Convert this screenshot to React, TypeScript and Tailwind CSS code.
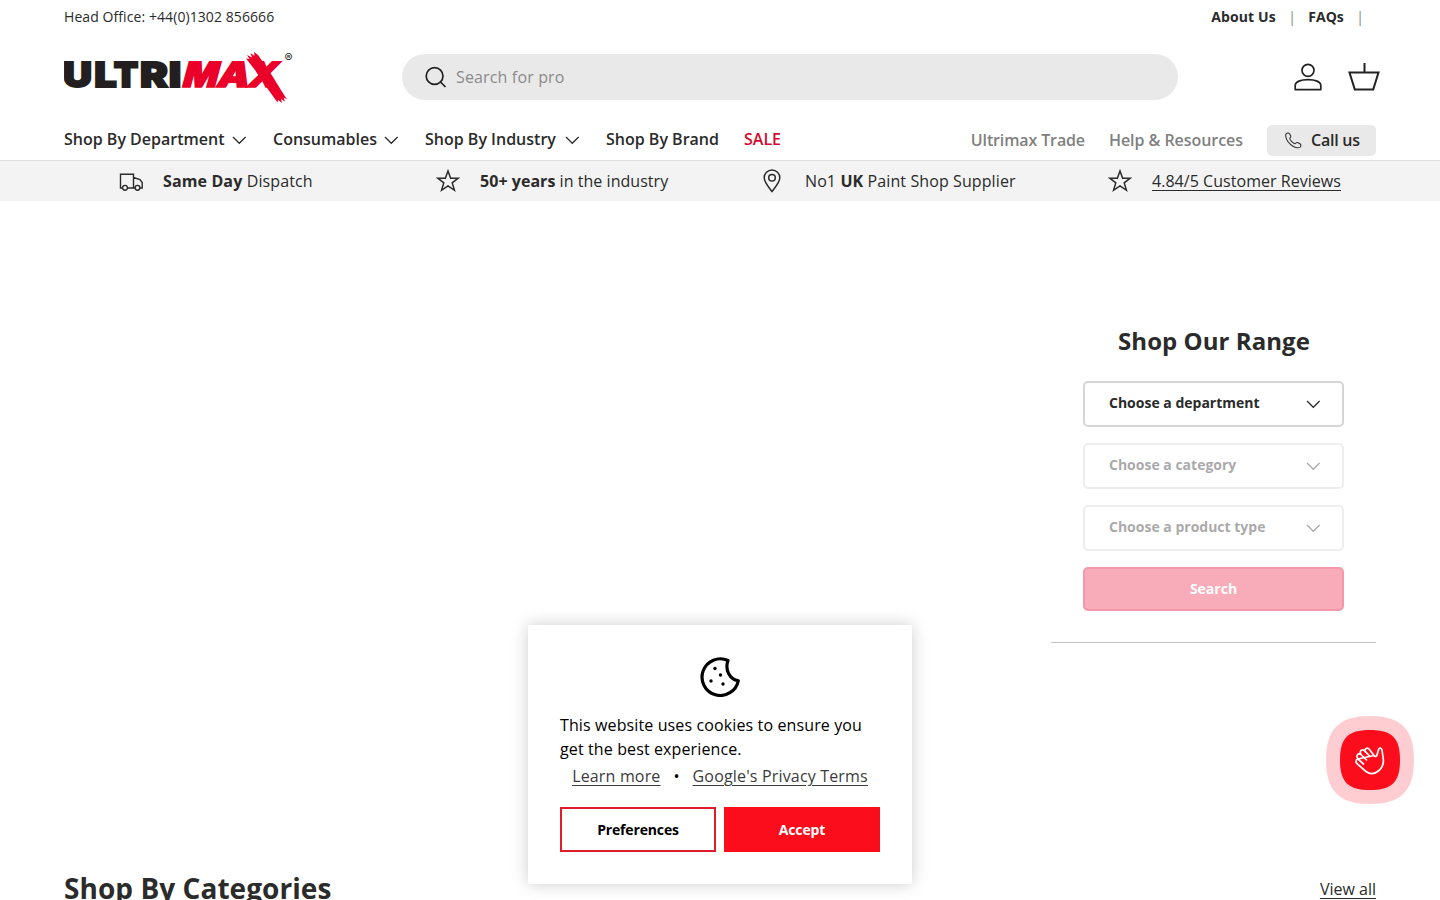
import React from "react";

const Chevron = ({ className = "" }: { className?: string }) => (
  <svg className={className} width="20" height="20" viewBox="0 0 20 20" fill="none" stroke="currentColor" strokeWidth="1.3">
    <path d="M4 7l6.3 6.3L16.6 7" />
  </svg>
);

const Star = () => (
  <svg width="24" height="24" viewBox="0 0 24 24" fill="none" stroke="#2a2b2a" strokeWidth="1.5">
    <path d="M12 2l2.65 7.2H22.3l-6.1 4.7 2.25 7.4L12 17l-6.45 4.3 2.25-7.4-6.1-4.7h7.65z" />
  </svg>
);

const Logo = () => (
  <svg width="232" height="54" viewBox="0 0 232 54" fontFamily="Inter, sans-serif" fontWeight="900" className="block">
    <g fill="#231f20" stroke="#231f20" strokeWidth="1.8" fontSize="34.7">
      <text x="-1" y="37.1" textLength="29" lengthAdjust="spacingAndGlyphs">U</text>
      <text x="30.2" y="37.1" textLength="22.500" lengthAdjust="spacingAndGlyphs">L</text>
      <text x="49.8" y="37.1" textLength="24.600" lengthAdjust="spacingAndGlyphs">T</text>
      <text x="76" y="37.1" textLength="28" lengthAdjust="spacingAndGlyphs">R</text>
      <text x="104.800" y="37.1" textLength="12.500" lengthAdjust="spacingAndGlyphs">I</text>
    </g>
    <g fill="#ea0029" stroke="#ea0029" strokeWidth="1.6" fontSize="34.7" transform="translate(0 37.1) skewX(-15)">
      <text x="117" y="0" textLength="35" lengthAdjust="spacingAndGlyphs">M</text>
      <text x="151.500" y="0" textLength="32" lengthAdjust="spacingAndGlyphs">A</text>
      <text x="182" y="0" textLength="30" lengthAdjust="spacingAndGlyphs">X</text>
    </g>
    <path fill="#ea0029" d="M182 8.500l3.500 0.500-2.500-4 5 2.500-1.500-4.500 4 3-.5-4 4 3L201 15l8 12 7 11.500 7 11-3.500-2 1.500 4-4-2.500 1 4-4-3-.5 2.500L206 42l-8-11-7-11z" />
    <text x="220.500" y="12" fontSize="12" fontWeight="400" fill="#231f20">®</text>
  </svg>
);

const navItems: [string, string, boolean][] = [
  ["Shop By Department", "w-[185px]", true],
  ["Consumables", "w-[128px]", true],
  ["Shop By Industry", "w-[157px]", true],
  ["Shop By Brand", "w-[114px]", false],
];

const Choice = ({ label, disabled = false }: { label: string; disabled?: boolean }) => (
  <button className={`flex h-[46px] w-full items-center justify-between rounded-[5px] border-2 border-[#d4d5d4] pr-[19px] pl-6 text-sm font-bold text-[#2a2b2a] ${disabled ? "opacity-40" : ""}`}>
    <span className="relative -top-px">{label}</span>
    <Chevron />
  </button>
);

export default function App() {
  return (
    <div className="h-[900px] w-[1440px] overflow-hidden bg-white font-['Open_Sans','Noto_Sans',sans-serif] text-base text-[#2a2b2a]">
      <header className="h-[161px] border-b border-[#dedede] px-16">
        <div className="flex h-[34px] items-center justify-between text-sm">
          <span className="tracking-[0.08px]">Head Office: +44(0)1302 856666</span>
          <div className="flex pr-[12px] font-bold">
            <span className="w-[77px] tracking-[0.1px]">About Us</span>
            <span className="w-5 font-normal text-[#888]">|</span>
            <span className="w-12">FAQs</span>
            <span className="font-normal text-[#888]">|</span>
          </div>
        </div>
        <div className="flex h-[86px] items-center">
          <div className="w-[338px] shrink-0"><Logo /></div>
          <div className="flex h-[46px] w-[776px] shrink-0 items-center rounded-full bg-[#e9e9e9] pl-[22px] text-[#8b8b8b]">
            <svg width="24" height="24" viewBox="0 0 24 24" fill="none" stroke="#222" strokeWidth="1.7">
              <circle cx="10.600" cy="11" r="8.400" />
              <path d="M16.500 17l5 5" />
            </svg>
            <span className="ml-2 tracking-[0.15px]">Search for pro</span>
          </div>
          <div className="ml-[114px] flex shrink-0 gap-6">
            <svg width="32" height="32" viewBox="0 0 32 32" fill="none" stroke="#222" strokeWidth="1.7">
              <circle cx="16" cy="9.300" r="6" />
              <path d="M3.200 28.600v-4.300c0-3.500 5.600-5.700 12.800-5.700s12.800 2.200 12.800 5.700v4.300z" strokeLinejoin="round" />
            </svg>
            <svg width="32" height="32" viewBox="0 0 32 32" fill="none" stroke="#222" strokeWidth="2">
              <path d="M16.500 2v10M1.500 11.500h29L25.200 28.500H6.800z" />
            </svg>
          </div>
        </div>
        <div className="flex h-10 items-center justify-between font-semibold">
          <nav className="flex items-center gap-6 pb-0.5">
            {navItems.map(([label, width, arrow]) => (
              <a key={label} className={`flex items-center justify-between whitespace-nowrap ${width}`}>
                {label}
                {arrow && <Chevron className="relative top-px" />}
              </a>
            ))}
            <a className="text-[#d6082c]">SALE</a>
          </nav>
          <nav className="flex items-center gap-6 text-[#7f807f]">
            <a className="tracking-[-0.13px]">Ultrimax Trade</a>
            <a className="tracking-[-0.05px]">Help &amp; Resources</a>
            <a className="flex h-[31px] w-[109px] items-center rounded-[5px] bg-[#e9e9e9] pl-[18px] text-[#2a2b2a]">
              <svg width="17" height="17" viewBox="0 0 17 17" fill="none" stroke="#333" strokeWidth="1.100" strokeLinejoin="round">
                <path d="M1 1.800C2.200.8 3.900.6 4.600 1.700l1.100 2.200c.5 1-.5 1.800-.9 2.500-.3 1.600 3.700 5.500 5.300 5.200.9-.5 1.500-1.500 2.500-1l2.300 1.100c1.100.6 1.100 2 .4 3.300-1.200 1.300-4.700.9-7.300-.7C4.300 12 1.700 8.600.9 5.200.7 3.900.5 2.700 1 1.800z" />
              </svg>
              <span className="ml-[9px] tracking-[-0.25px]">Call us</span>
            </a>
          </nav>
        </div>
      </header>

      <div className="flex h-10 items-center bg-[#f3f3f3] pl-[119px]">
        <div className="flex w-[317px] items-center gap-5">
          <svg width="24" height="24" viewBox="0 0 24 24" fill="none" stroke="#2a2b2a" strokeWidth="1.4">
            <path d="M3.500 19H1.500V5.200h13V19H8.500M14.500 8.500l6.500 2 2.200 3V19H21M16 19h-1.500" />
            <circle cx="6" cy="18.800" r="2.400" /><circle cx="18.500" cy="18.800" r="2.400" />
          </svg>
          <span className="tracking-[0.12px]"><b>Same Day</b> Dispatch</span>
        </div>
        <div className="flex w-[324px] items-center gap-5"><Star /><span className="tracking-[0.04px]"><b>50+ years</b> in the industry</span></div>
        <div className="flex w-[348px] items-center gap-[21px]">
          <svg width="24" height="24" viewBox="0 0 24 24" fill="none" stroke="#2a2b2a" strokeWidth="1.500">
            <path d="M12 22.500C9 18.500 4.200 13.300 4.200 8.700a7.800 7.800 0 0 1 15.600 0c0 4.600-4.800 9.800-7.800 13.800z" />
            <circle cx="12" cy="8.700" r="3.300" />
          </svg>
          <span className="tracking-[0.1px]">No1 <b>UK</b> Paint Shop Supplier</span>
        </div>
        <div className="flex items-center gap-5"><Star /><a className="tracking-[0.04px] underline underline-offset-[3px]">4.84/5 Customer Reviews</a></div>
      </div>

      <main className="px-16">
        <section className="ml-auto h-[442px] w-[325px] border-b border-[#c4c4c4] px-8 pt-[122px]">
          <h2 className="pl-px text-center text-2xl leading-9 font-bold tracking-[0.05px]">Shop Our Range</h2>
          <div className="mt-[22px] flex flex-col gap-4">
            <Choice label="Choose a department" />
            <Choice label="Choose a category" disabled />
            <Choice label="Choose a product type" disabled />
            <button className="h-11 rounded-[5px] border-2 border-[#f497a8] bg-[#f8acba] text-sm font-bold text-white">Search</button>
          </div>
        </section>
        <section className="mt-[224px] flex items-start justify-between">
          <h2 className="text-[28px] leading-[42px] font-bold tracking-[0.05px]">Shop By Categories</h2>
          <a className="pt-[10px] underline underline-offset-[3px]">View all</a>
        </section>
      </main>

      <aside className="absolute top-[625px] left-[528px] flex h-[259px] w-96 flex-col bg-white px-8 pt-8 text-black shadow-[0_0_16px_rgba(0,0,0,0.2)]">
        <svg className="self-center" width="40" height="40" viewBox="0 0 40 40" fill="none" stroke="#000" strokeWidth="3.200" strokeLinejoin="round">
          <path d="M28 3.500A18.300 18.300 0 1 0 38.300 23.700C30 22.500 24.500 13 28 3.500z" />
          <g fill="#000" stroke="none"><circle cx="15" cy="11.500" r="1.700" /><circle cx="20.500" cy="18" r="1.700" /><circle cx="11" cy="24" r="1.700" /><circle cx="23" cy="27" r="1.700" /></g>
        </svg>
        <p className="mt-4 leading-6 tracking-[0.12px]">This website uses cookies to ensure you<br />get the best experience.</p>
        <div className="mt-[3px] flex justify-center gap-3 leading-6 tracking-[0.17px] whitespace-nowrap">
          <a className="text-[#3b3b3b] underline underline-offset-[3px]">Learn more</a>
          <span className="w-2 text-center">•</span>
          <a className="text-[#3b3b3b] underline underline-offset-[3px]">Google's Privacy Terms</a>
        </div>
        <div className="mt-[19px] flex gap-2 text-sm font-bold tracking-[-0.15px]">
          <button className="h-[45px] w-[156px] border-2 border-[#df1c29]">Preferences</button>
          <button className="h-[45px] w-[156px] bg-[#fc0d1b] text-white">Accept</button>
        </div>
      </aside>

      <button className="absolute top-[716px] left-[1326px] h-[88px] w-[88px]">
        <svg width="88" height="88" viewBox="0 0 88 88" className="block">
          <path fill="#fecdd1" d="M44 0C75 0 88 13 88 44S75 88 44 88 0 75 0 44 13 0 44 0z" />
          <path fill="#fc0d1b" d="M44 14c22 0 30 8 30 30s-8 30-30 30-30-8-30-30 8-30 30-30z" />
          <g fill="none" stroke="#fff" strokeWidth="1.700" strokeLinecap="round" strokeLinejoin="round">
            <path d="M48 39.500L43.500 33.500C41.500 31 38 32.500 39.300 35.700L44 40.500M39.300 35.700C36.500 32 32.500 35 35 38.500L40.500 44M35 38.500C32 36.500 29.500 40 32 43L37.500 48M32 43C29.500 43.500 29.500 46.500 31.500 48.200L40 55.500C44 58.500 49 58 53 54.500C57.500 50.500 58 46 57 41L56 34C55.500 31.500 53 31.700 52.500 33.700L51 39C50.500 40.700 48.900 41 48 39.500z" />
          </g>
        </svg>
      </button>
    </div>
  );
}
